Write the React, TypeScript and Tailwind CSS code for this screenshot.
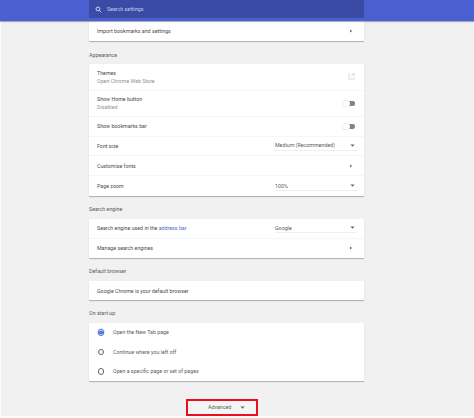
import React from "react";

const Arrow = () => (
  <svg width="4" height="4" viewBox="0 0 4 4" className="block">
    <path d="M1.2 .6 3 2 1.2 3.4z" fill="#555" />
  </svg>
);
const Caret = () => (
  <svg width="5" height="3" viewBox="0 0 5 3" className="block">
    <path d="M.4 .4h4.2L2.5 2.8z" fill="#666" />
  </svg>
);
const Toggle = () => (
  <div className="relative w-[12px] h-[7px] flex items-center">
    <div className="ml-[3px] w-[9px] h-[5px] rounded-[2px] bg-[#858585]" />
    <div className="absolute left-0 top-0 w-[7px] h-[7px] rounded-full bg-white shadow-[0_0_1px_rgba(0,0,0,0.3)]" />
  </div>
);

function Row({ title, sub, right, h, last }: { title: React.ReactNode; sub?: string; right?: React.ReactNode; h: string; last?: boolean }) {
  return (
    <div className={`${h} flex items-center pl-2 pr-[9px] ${last ? "" : "border-b border-[#f6f6f6]"}`}>
      <div className="flex-1 min-w-0">
        <div className="leading-[8px] text-[#4c4c4c]">{title}</div>
        {sub && <div className="leading-[8px] text-[#929292]">{sub}</div>}
      </div>
      {right}
    </div>
  );
}

const ArrowSlot = () => (
  <div className="w-[8px] flex justify-center"><Arrow /></div>
);

const Select = ({ label }: { label: string }) => (
  <div className="w-[82px] mr-[-2px] h-[10px] flex items-center justify-between pr-[2px] border-b border-[#eeeeee] text-[#5c5c5c]">
    <span className="leading-[8px]">{label}</span>
    <Caret />
  </div>
);

const Card = ({ children }: { children: React.ReactNode }) => (
  <div className="bg-white rounded-[1px] shadow-[0_1px_1px_rgba(0,0,0,0.28)]">{children}</div>
);

const Label = ({ children, className }: { children: React.ReactNode; className: string }) => (
  <div className={`leading-[8px] text-[#5c5c5c] ${className}`}>{children}</div>
);

const Radio = ({ checked }: { checked?: boolean }) => (
  <div className={`w-[6.5px] h-[6.5px] rounded-full border-[0.75px] flex items-center justify-center ${checked ? "border-[#4a6fd8]" : "border-[#666]"}`}>
    {checked && <div className="w-[3.5px] h-[3.5px] rounded-full bg-[#4a6fd8]" />}
  </div>
);

const RadioRow = ({ label, checked }: { label: string; checked?: boolean }) => (
  <div className="h-[19.5px] flex items-center pl-[8px] text-[#5c5c5c]">
    <div className={`w-[8px] h-[8px] rounded-full flex items-center justify-center ${checked ? "bg-[#dfe6f8]" : ""}`}>
      <Radio checked={checked} />
    </div>
    <span className="ml-[8px] leading-[8px]">{label}</span>
  </div>
);

export default function App() {
  return (
    <div className="relative w-[474px] h-[418px] overflow-hidden bg-white font-['Roboto',sans-serif] text-[5.3px]">
      <div className="ml-[1px] h-[416px] bg-[#f1f1f1]">
        <div className="h-[21px] -ml-[1px] bg-[#4a5fd0] shadow-[0_1px_1px_rgba(0,0,0,0.3)] relative z-10 pl-[89px]">
          <div className="w-[275px] h-[18px] bg-[#3a4ba6] flex items-center pl-[6px] text-[#c5cdf0]">
            <svg width="7" height="7" viewBox="0 0 24 24" fill="none" stroke="#dfe4fa" strokeWidth="3">
              <circle cx="10" cy="10" r="6.5" />
              <path d="M15 15l7 7" />
            </svg>
            <span className="ml-[5px] leading-[8px]">Search settings</span>
          </div>
        </div>
        <div className="ml-[88px] w-[275px]">
          <Card>
            <Row h="h-[20px]" title="Import bookmarks and settings" right={<ArrowSlot />} last />
          </Card>
          <Label className="mt-[10px] mb-[5px]">Appearance</Label>
          <Card>
            <Row
              h="h-[26.5px]"
              title="Themes"
              sub="Open Chrome Web Store"
              right={
                <svg width="7" height="7" viewBox="0 0 24 24" fill="none" stroke="#c4c4c4" strokeWidth="2" className="mr-[0.5px]">
                  <path d="M10 3H3v18h18v-7M14 3h7v7M21 3 10 14" />
                </svg>
              }
            />
            <Row h="h-[26px]" title="Show Home button" sub="Disabled" right={<Toggle />} />
            <Row h="h-[20px]" title="Show bookmarks bar" right={<Toggle />} />
            <Row h="h-[19.5px]" title="Font size" right={<Select label="Medium (Recommended)" />} />
            <Row h="h-[20px]" title="Customise fonts" right={<ArrowSlot />} />
            <Row h="h-[20px]" title="Page zoom" right={<Select label="100%" />} last />
          </Card>
          <Label className="mt-[9px] mb-[6px]">Search engine</Label>
          <Card>
            <Row
              h="h-[19.5px]"
              title={<>Search engine used in the <span className="text-[#5a68c8]">address bar</span></>}
              right={<Select label="Google" />}
            />
            <Row h="h-[19.5px]" title="Manage search engines" right={<ArrowSlot />} last />
          </Card>
          <Label className="mt-[9px] mb-[6px]">Default browser</Label>
          <Card>
            <Row h="h-[19px]" title="Google Chrome is your default browser" last />
          </Card>
          <Label className="mt-[9px] mb-[5.5px]">On start-up</Label>
          <Card>
            <RadioRow label="Open the New Tab page" checked />
            <RadioRow label="Continue where you left off" />
            <RadioRow label="Open a specific page or set of pages" />
          </Card>
          <div className="mt-[17.5px] ml-[97px] w-[72px] h-[17.5px] border-2 border-[#e8101c] bg-[#f4f4f4] flex items-center pl-[20px] text-[#5c5c5c]">
            <span className="leading-[8px]">Advanced</span>
            <span className="ml-[9px]"><Caret /></span>
          </div>
        </div>
      </div>
    </div>
  );
}
